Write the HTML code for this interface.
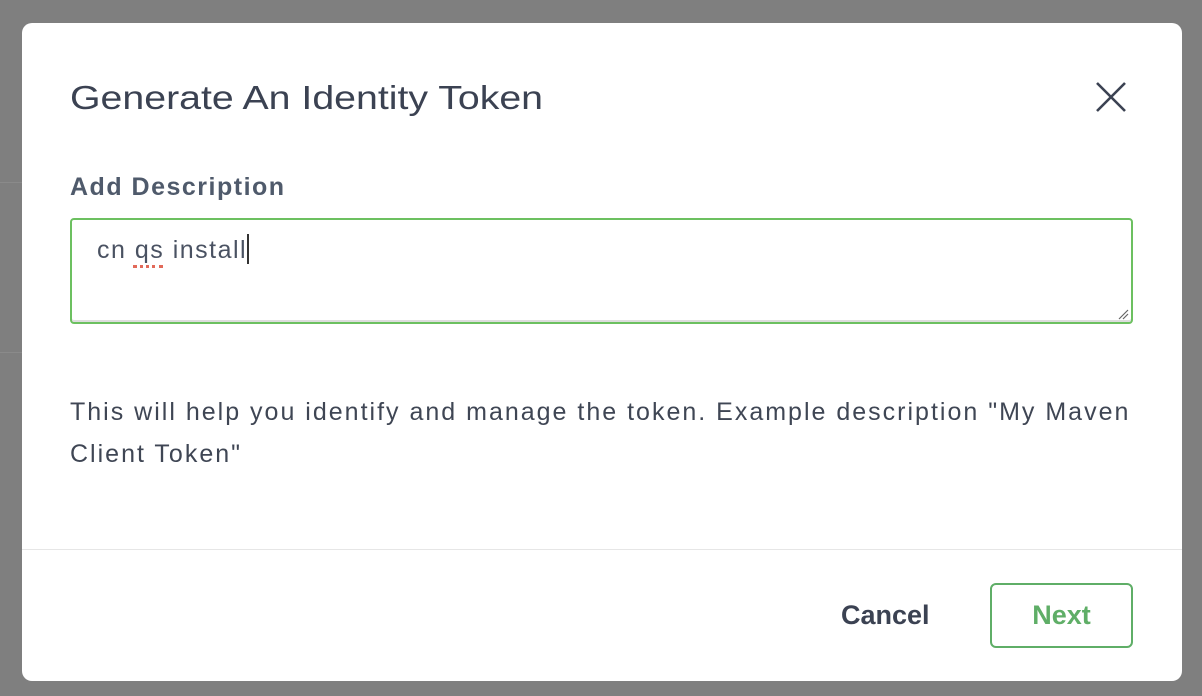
<!DOCTYPE html>
<html><head><style>
body{margin:0;width:1202px;height:696px;background:#7f7f7f;position:relative;overflow:hidden;font-family:"Liberation Sans",sans-serif;}
.line{position:absolute;left:0;width:22px;height:1px;background:#8a8a8a}
.m{position:absolute;left:22px;top:23px;width:1160px;height:658px;background:#fff;border-radius:10px;}
.t{position:absolute;left:48px;top:56px;font-size:33px;color:#3b4252;white-space:nowrap;transform:scaleX(1.19);transform-origin:0 0;font-weight:500}
.x{position:absolute;left:1073px;top:58px}
.l{position:absolute;left:48px;top:150px;font-size:25px;color:#4f5a6b;font-weight:bold;letter-spacing:1.5px}
.ta{position:absolute;left:48px;top:195px;width:1059px;height:102px;border:2px solid #6cc060;border-radius:4px;box-shadow:inset 0 -2px 0 #ddd}
.tx{position:absolute;left:25px;top:14px;font-size:25px;color:#4a5262;letter-spacing:1.5px}
.cur{display:inline-block;width:2px;height:30px;background:#333;vertical-align:-6px;margin-left:0}
.sq{position:absolute;left:61px;top:45px;width:30px;border-top:3px dotted #e26a5a}
.h{position:absolute;left:48px;top:368px;width:1080px;font-size:25px;line-height:42px;color:#3f4654;letter-spacing:2.0px}
.d{position:absolute;left:0;top:526px;width:1160px;height:1px;background:#e6e6e6}
.c{position:absolute;left:819px;top:577px;font-size:27px;color:#3b4252;font-weight:bold}
.n{position:absolute;left:968px;top:560px;width:139px;height:61px;border:2px solid #5fae67;border-radius:6px;color:#5fae67;font-size:27px;font-weight:bold;text-align:center;line-height:61px}
</style></head><body>
<div class="line" style="top:182px"></div><div class="line" style="top:352px"></div>
<div class="m">
<div class="t">Generate An Identity Token</div>
<svg class="x" width="32" height="32" viewBox="0 0 32 32"><path d="M2 2L30 30M30 2L2 30" stroke="#3b4252" stroke-width="2.6" fill="none"/></svg>
<div class="l">Add Description</div>
<div class="ta"><div class="tx">cn qs install<span class="cur"></span></div><div class="sq"></div>
<svg style="position:absolute;right:2px;bottom:2px" width="12" height="12"><path d="M2 11L11 2M6 11L11 6" stroke="#666" stroke-width="1.2"/></svg></div>
<div class="h">This will help you identify and manage the token. Example description "My Maven<br>Client Token"</div>
<div class="d"></div>
<div class="c">Cancel</div>
<div class="n">Next</div>
</div>
</body></html>
